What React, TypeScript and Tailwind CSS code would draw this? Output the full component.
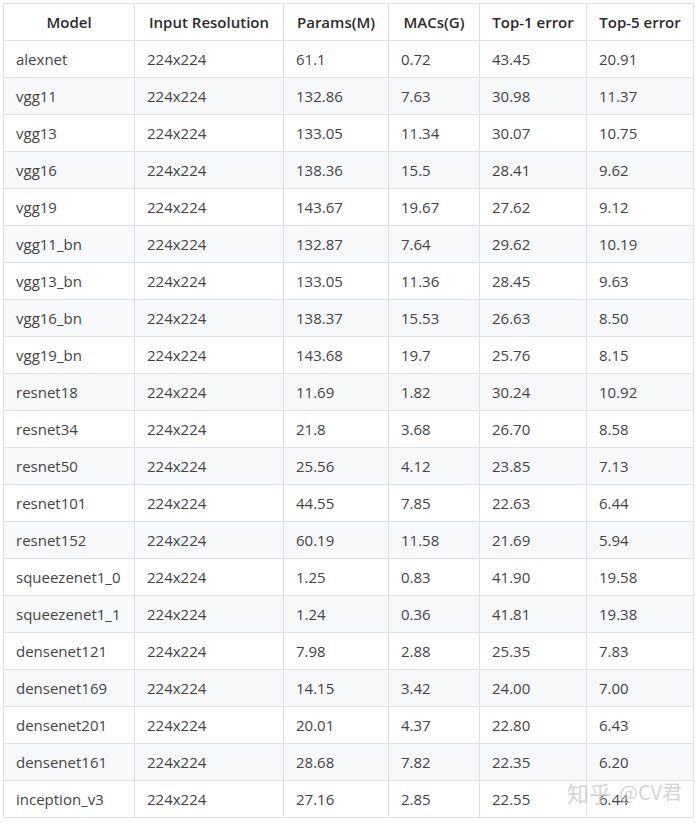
const header = ['Model', 'Input Resolution', 'Params(M)', 'MACs(G)', 'Top-1 error', 'Top-5 error'];

const rows: string[][] = [
  ['alexnet', '224x224', '61.1', '0.72', '43.45', '20.91'],
  ['vgg11', '224x224', '132.86', '7.63', '30.98', '11.37'],
  ['vgg13', '224x224', '133.05', '11.34', '30.07', '10.75'],
  ['vgg16', '224x224', '138.36', '15.5', '28.41', '9.62'],
  ['vgg19', '224x224', '143.67', '19.67', '27.62', '9.12'],
  ['vgg11_bn', '224x224', '132.87', '7.64', '29.62', '10.19'],
  ['vgg13_bn', '224x224', '133.05', '11.36', '28.45', '9.63'],
  ['vgg16_bn', '224x224', '138.37', '15.53', '26.63', '8.50'],
  ['vgg19_bn', '224x224', '143.68', '19.7', '25.76', '8.15'],
  ['resnet18', '224x224', '11.69', '1.82', '30.24', '10.92'],
  ['resnet34', '224x224', '21.8', '3.68', '26.70', '8.58'],
  ['resnet50', '224x224', '25.56', '4.12', '23.85', '7.13'],
  ['resnet101', '224x224', '44.55', '7.85', '22.63', '6.44'],
  ['resnet152', '224x224', '60.19', '11.58', '21.69', '5.94'],
  ['squeezenet1_0', '224x224', '1.25', '0.83', '41.90', '19.58'],
  ['squeezenet1_1', '224x224', '1.24', '0.36', '41.81', '19.38'],
  ['densenet121', '224x224', '7.98', '2.88', '25.35', '7.83'],
  ['densenet169', '224x224', '14.15', '3.42', '24.00', '7.00'],
  ['densenet201', '224x224', '20.01', '4.37', '22.80', '6.43'],
  ['densenet161', '224x224', '28.68', '7.82', '22.35', '6.20'],
  ['inception_v3', '224x224', '27.16', '2.85', '22.55', '6.44'],
];

const widths = ['w-[131px]', 'w-[149px]', 'w-[105px]', 'w-[91px]', 'w-[107px]', 'w-[107px]'];

export default function App() {
  return (
    <div className="relative w-[698px] h-[823px] bg-white pt-[3px] pl-[3px] font-['Open_Sans','Noto_Sans',sans-serif] text-[#333]">
      <table className="table-fixed border-collapse w-[690px] text-[15px]">
        <colgroup>
          {widths.map((w, i) => (
            <col key={i} className={w} />
          ))}
        </colgroup>
        <thead>
          <tr className="h-[37px] bg-white">
            {header.map((h) => (
              <th key={h} className="border border-[#dfe2e5] px-[12px] text-center font-semibold text-[#2b2b2b]">
                {h}
              </th>
            ))}
          </tr>
        </thead>
        <tbody>
          {rows.map((r, idx) => (
            <tr key={r[0]} className={idx % 2 === 1 ? 'h-[37px] bg-[#f6f8fa]' : 'h-[37px] bg-white'}>
              {r.map((c, j) => (
                <td key={j} className="border border-[#dfe2e5] px-[12px] text-left font-normal text-[#444]">
                  {c}
                </td>
              ))}
            </tr>
          ))}
        </tbody>
      </table>

      {/* zhihu watermark */}
      <div className="absolute left-[567px] top-[781px] flex items-center gap-[8px] text-[22px] leading-none text-[#c8c8c8]/80 font-['Noto_Sans_CJK_SC',sans-serif]">
        <span>知乎</span>
        <span className="text-[20px]">@CV君</span>
      </div>
    </div>
  );
}
